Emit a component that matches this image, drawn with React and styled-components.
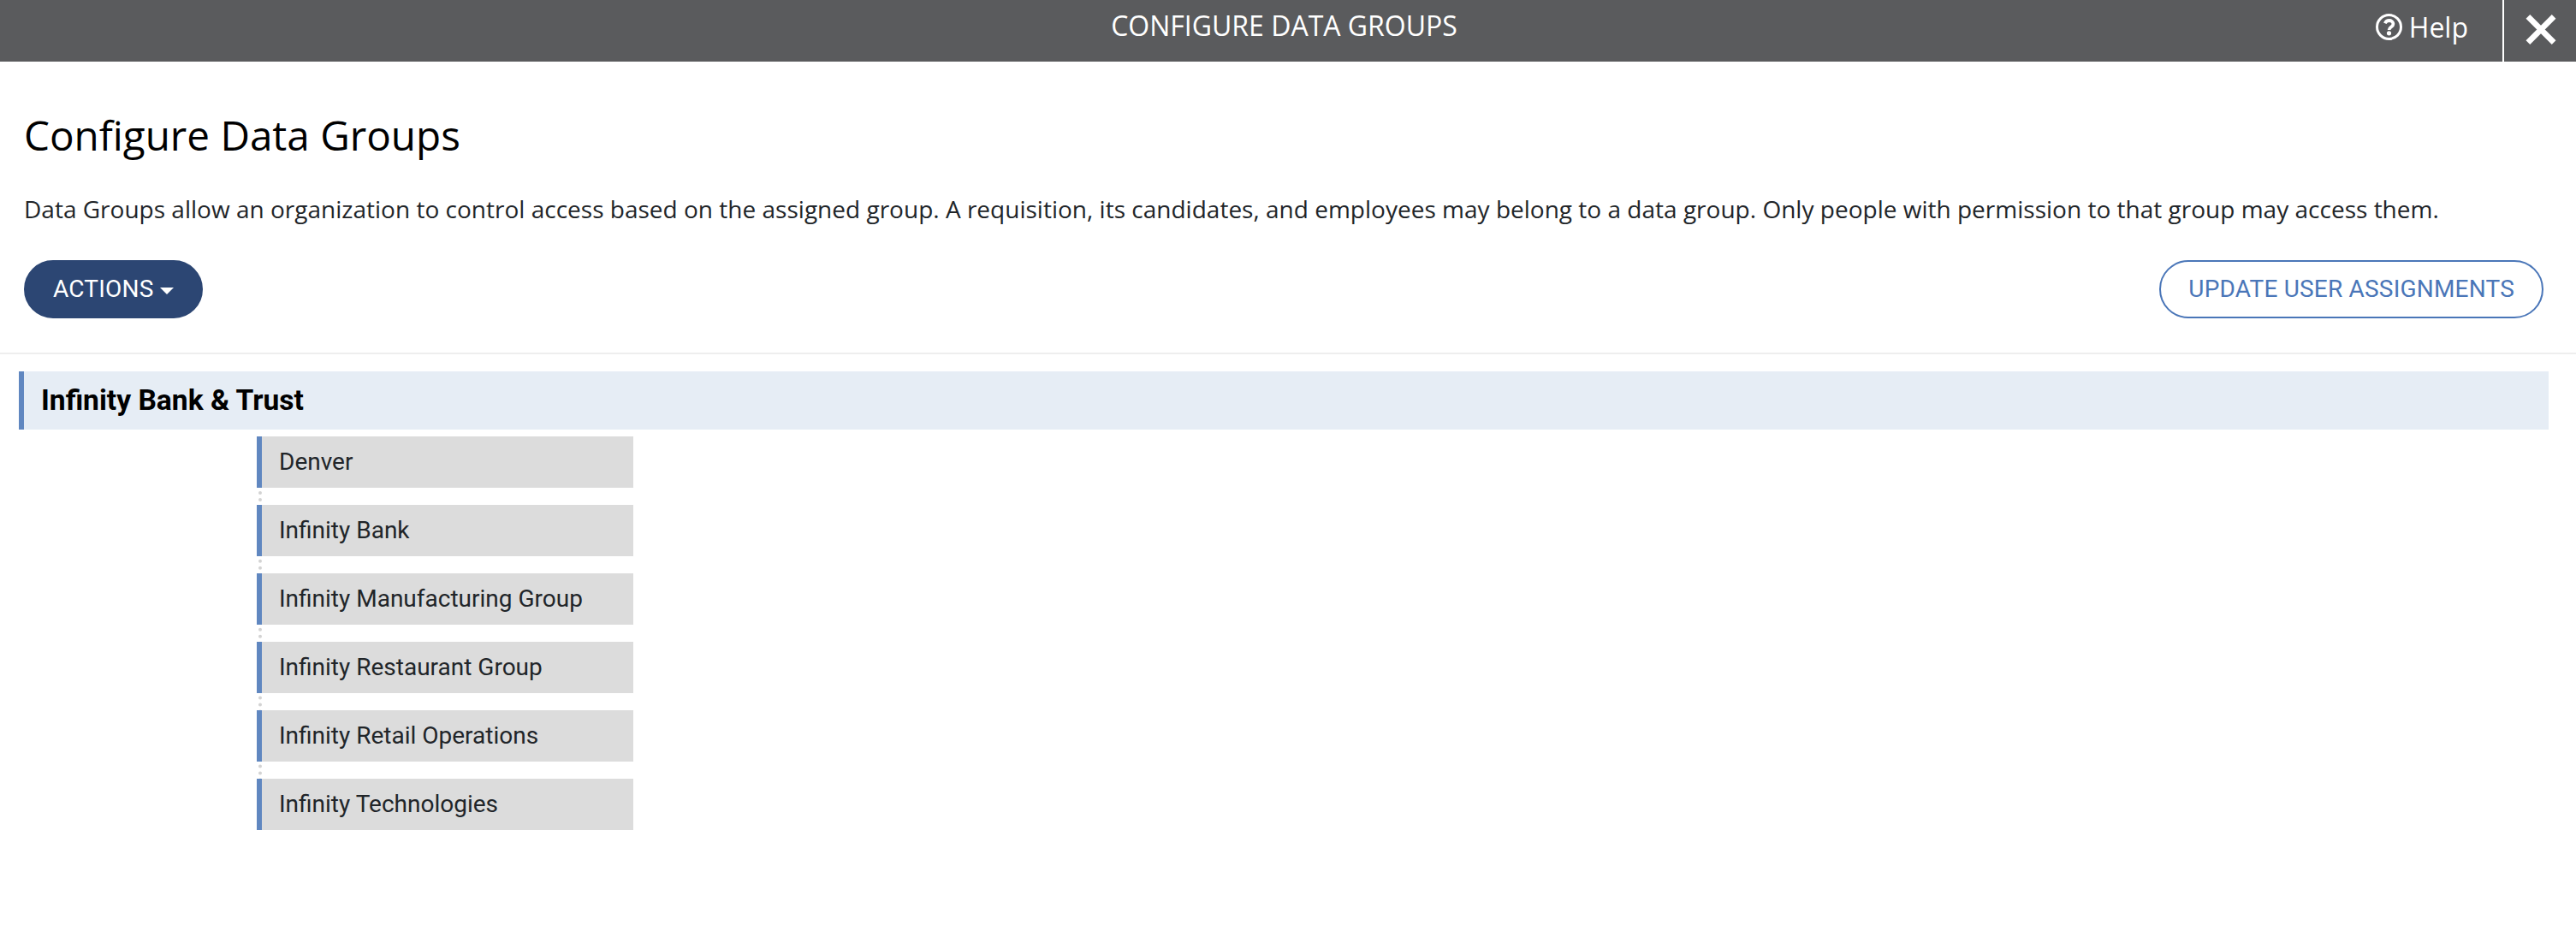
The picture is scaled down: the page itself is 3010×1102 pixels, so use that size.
import React from "react";
import styled, { createGlobalStyle } from "styled-components";

const GlobalStyle = createGlobalStyle`
  * {
    box-sizing: border-box;
  }

  body {
    margin: 0;
    background: #fff;
    color: #212529;
    font-family: "Open Sans", sans-serif;
    font-size: 28px;
  }
`;

const TopBar = styled.header`
  display: grid;
  grid-template-columns: 1fr auto 1fr;
  height: 72px;
  background: #5a5b5d;
  color: #fff;
  font-size: 32px;
  line-height: 44px;
`;

const TopBarTitle = styled.div`
  grid-column: 2;
  padding: 8px 9px 0 0;
`;

const TopBarTools = styled.div`
  display: flex;
  justify-content: flex-end;
  margin-left: -9px;
`;

const HelpButton = styled.button`
  display: flex;
  align-items: flex-start;
  gap: 8px;
  padding: 10px 40px 0 0;
  border: 0;
  background: none;
  color: inherit;
  font: inherit;

  svg {
    width: 31px;
    height: 31px;
    margin-top: 6px;
  }
`;

const CloseButton = styled.button`
  display: flex;
  align-items: flex-start;
  width: 86px;
  padding: 16px 0 0 25px;
  border: 0;
  border-left: 2px solid #fff;
  background: none;
  color: inherit;

  svg {
    width: 36px;
    height: 36px;
    flex: none;
  }
`;

const PageHead = styled.section`
  height: 342px;
  padding: 53px 38px 0 28px;
  border-bottom: 2px solid #eee;
`;

const Title = styled.h1`
  margin: 0;
  color: #000;
  font-size: 47.6px;
  font-weight: 400;
  line-height: 65px;
`;

const Description = styled.p`
  margin: 33px 0 0;
  letter-spacing: 0.01px;
  line-height: 42px;
  white-space: nowrap;
`;

const Toolbar = styled.div`
  display: flex;
  justify-content: space-between;
  margin-top: 39px;
`;

const Button = styled.button`
  display: flex;
  align-items: center;
  height: 68px;
  padding: 0 32px;
  border: 2px solid ${({ $primary }) => ($primary ? "#2c4673" : "#4a76b8")};
  border-radius: 34px;
  background: ${({ $primary }) => ($primary ? "#2c4673" : "#fff")};
  color: ${({ $primary }) => ($primary ? "#fff" : "#4a76b8")};
  font-family: Roboto, sans-serif;
  font-size: 28px;
  letter-spacing: 0.2px;
  line-height: 42px;
`;

const Caret = styled.span`
  margin: 4px 0 0 7px;
  border-top: 8px solid;
  border-right: 8px solid transparent;
  border-left: 8px solid transparent;
`;

const Tree = styled.main`
  padding: 20px 32px 0 22px;
  font-family: Roboto, sans-serif;
`;

const RootGroup = styled.div`
  height: 68px;
  padding-left: 20px;
  border-left: 6px solid #6087c0;
  background: #e6edf5;
  color: #000;
  font-size: 33.6px;
  font-weight: 700;
  line-height: 67px;
`;

/* the dotted connector shows only in the gaps between the items */
const GroupList = styled.ul`
  height: 460px;
  width: 438px;
  margin: 8px 0 0 280px;
  padding: 0;
  border-left: 4px dotted #d3d3d3;
  list-style: none;
`;

const GroupItem = styled.li`
  height: 60px;
  margin: 0 0 20px -6px;
  padding-left: 20px;
  border-left: 6px solid #6087c0;
  background: #dcdcdc;
  line-height: 59px;

  &:last-child {
    margin-bottom: 0;
  }
`;

const HelpIcon = () => (
  <svg viewBox="0 0 31 31" fill="none" stroke="currentColor" aria-hidden="true">
    <circle cx="15.5" cy="15.5" r="14" strokeWidth="3" />
    <path d="M10.8 11.2C11.8 9 13.4 8 15.7 8c2.7 0 4.7 1.7 4.7 4 0 3.6-4.8 3.4-4.8 7" strokeWidth="3.8" />
    <circle cx="15.5" cy="22.8" r="2.6" fill="currentColor" stroke="none" />
  </svg>
);

const CloseIcon = () => (
  <svg viewBox="0 0 36 36" stroke="currentColor" strokeWidth="6.7" aria-hidden="true">
    <path d="M2.9 3.4 33.1 33.6M33.1 3.4 2.9 33.6" />
  </svg>
);

const groups = [
  "Denver",
  "Infinity Bank",
  "Infinity Manufacturing Group",
  "Infinity Restaurant Group",
  "Infinity Retail Operations",
  "Infinity Technologies",
];

export default function App() {
  return (
    <>
      <GlobalStyle />
      <TopBar>
        <TopBarTitle>CONFIGURE DATA GROUPS</TopBarTitle>
        <TopBarTools>
          <HelpButton>
            <HelpIcon />
            Help
          </HelpButton>
          <CloseButton aria-label="Close">
            <CloseIcon />
          </CloseButton>
        </TopBarTools>
      </TopBar>

      <PageHead>
        <Title>Configure Data Groups</Title>
        <Description>
          Data Groups allow an organization to control access based on the assigned group. A requisition, its
          candidates, and employees may belong to a data group. Only people with permission to that group may access
          them.
        </Description>
        <Toolbar>
          <Button $primary>
            ACTIONS
            <Caret />
          </Button>
          <Button>UPDATE USER ASSIGNMENTS</Button>
        </Toolbar>
      </PageHead>

      <Tree>
        <RootGroup>Infinity Bank &amp; Trust</RootGroup>
        <GroupList>
          {groups.map((name) => (
            <GroupItem key={name}>{name}</GroupItem>
          ))}
        </GroupList>
      </Tree>
    </>
  );
}
